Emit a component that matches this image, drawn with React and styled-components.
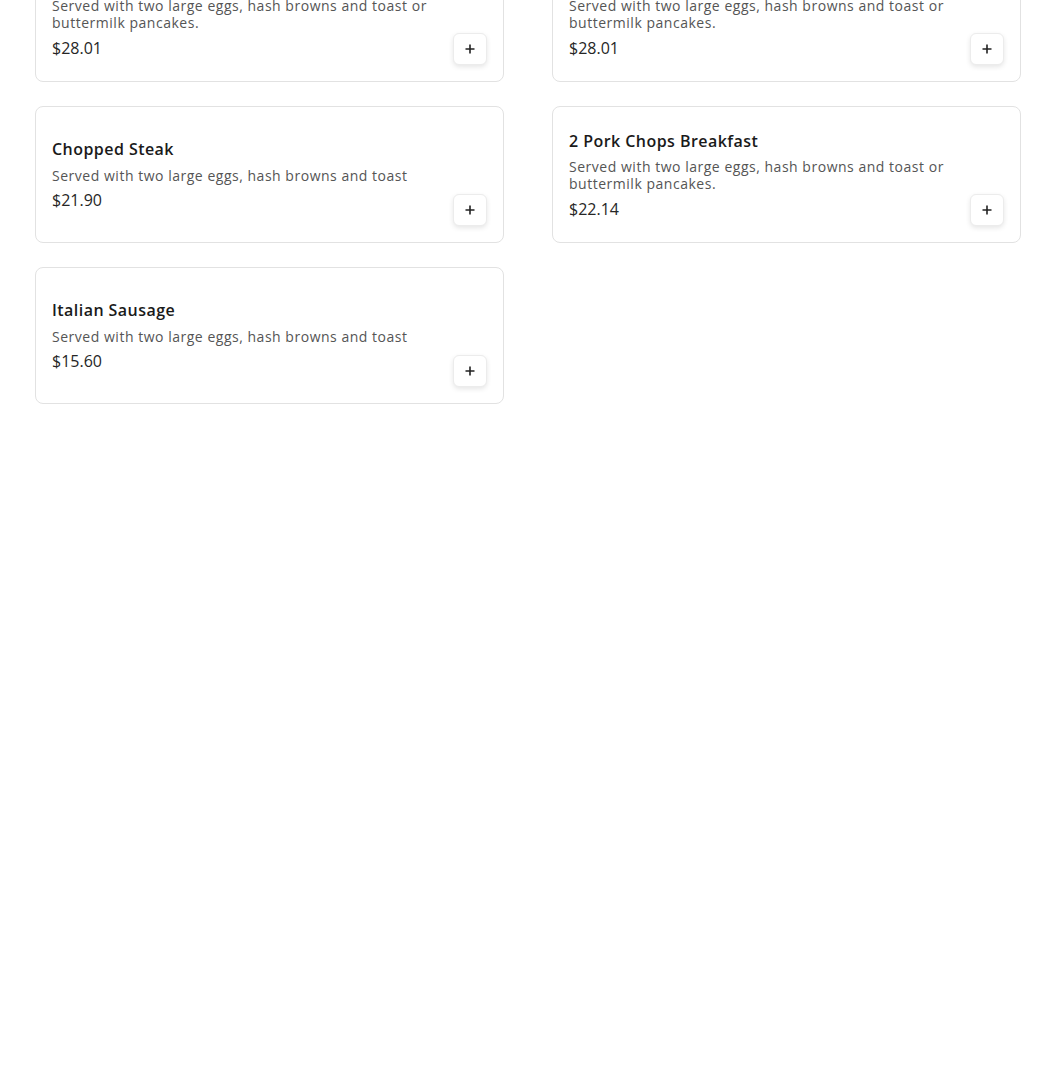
import React from 'react'
import styled, { createGlobalStyle } from 'styled-components'

const GlobalStyle = createGlobalStyle`
  html, body {
    margin: 0;
    padding: 0;
    background: #ffffff;
    font-family: "Open Sans", "Liberation Sans", sans-serif;
    color: #1c1c1c;
  }
`

const Page = styled.div`
  height: 1092px;
  overflow: hidden;
`

const Grid = styled.div`
  display: grid;
  grid-template-columns: 469px 469px;
  column-gap: 48px;
  row-gap: 24px;
  margin-top: -55px;
  padding-left: 35px;
`

const Card = styled.div`
  box-sizing: border-box;
  height: 137px;
  display: flex;
  align-items: center;
  gap: 12px;
  padding: 16px;
  border: 1px solid #e2e2e2;
  border-radius: 8px;
  background: #fff;
`

const Info = styled.div`
  flex: 1;
  display: flex;
  flex-direction: column;
`

const Title = styled.div`
  font-size: 16px;
  font-weight: 600;
  line-height: 20px;
  color: #1a1a1a;
  letter-spacing: 0.45px;
`

const Desc = styled.div`
  margin-top: 7.5px;
  font-size: 14px;
  line-height: 17px;
  color: #555555;
  letter-spacing: 0.52px;
`

const Price = styled.div`
  margin-top: 6.5px;
  font-size: 16px;
  line-height: 20px;
  color: #262626;
`

const AddButton = styled.button`
  align-self: flex-end;
  flex: none;
  width: 34px;
  height: 32px;
  display: flex;
  align-items: center;
  justify-content: center;
  padding: 0;
  border: 1px solid #ececec;
  border-radius: 6px;
  background: #fff;
  box-shadow: 0 2px 5px rgba(0, 0, 0, 0.1);
  cursor: pointer;
`

const Plus = () => (
  <svg width="12" height="12" viewBox="0 0 12 12">
    <path d="M6 1.5v9M1.5 6h9" stroke="#222" strokeWidth="1.6" />
  </svg>
)

const LONG = 'Served with two large eggs, hash browns and toast or buttermilk pancakes.'
const SHORT = 'Served with two large eggs, hash browns and toast'

// the first row is scrolled partly out of view in the reference
const items = [
  { name: 'Steak & Eggs', desc: LONG, price: '$28.01' },
  { name: 'Steak & Eggs', desc: LONG, price: '$28.01' },
  { name: 'Chopped Steak', desc: SHORT, price: '$21.90' },
  { name: '2 Pork Chops Breakfast', desc: LONG, price: '$22.14' },
  { name: 'Italian Sausage', desc: SHORT, price: '$15.60' },
]

const MenuCard = ({ item }) => (
  <Card>
    <Info>
      <Title>{item.name}</Title>
      <Desc>{item.desc}</Desc>
      <Price>{item.price}</Price>
    </Info>
    <AddButton aria-label="Add">
      <Plus />
    </AddButton>
  </Card>
)

export default function App() {
  return (
    <Page>
      <GlobalStyle />
      <Grid>
        {items.map((item, i) => (
          <MenuCard key={i} item={item} />
        ))}
      </Grid>
    </Page>
  )
}
